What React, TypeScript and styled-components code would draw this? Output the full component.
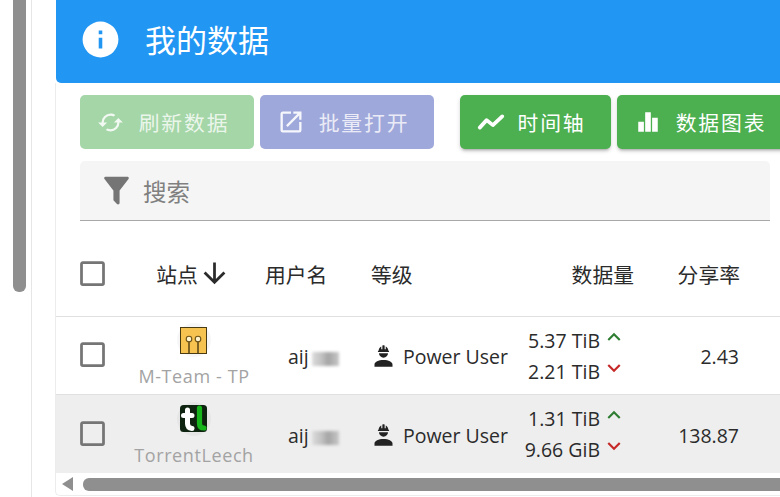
import styled, { createGlobalStyle } from 'styled-components';

const GlobalStyle = createGlobalStyle`
  html, body {
    margin: 0;
    padding: 0;
    width: 780px;
    height: 497px;
    overflow: hidden;
    background: #fff;
  }
  body {
    font-family: "Open Sans", "Noto Sans CJK SC", sans-serif;
    color: rgba(0, 0, 0, 0.87);
  }
`;

const paths = {
  info: 'M13,9H11V7H13M13,17H11V11H13M12,2A10,10 0 0,0 2,12A10,10 0 0,0 12,22A10,10 0 0,0 22,12A10,10 0 0,0 12,2Z',
  cached: 'M19,8L15,12H18A6,6 0 0,1 12,18C11,18 10.03,17.75 9.2,17.3L7.74,18.76C8.97,19.54 10.43,20 12,20A8,8 0 0,0 20,12H23M6,12A6,6 0 0,1 12,6C13,6 13.97,6.25 14.8,6.7L16.26,5.24C15.03,4.46 13.57,4 12,4A8,8 0 0,0 4,12H1L5,16L9,12',
  open: 'M14,3V5H17.59L7.76,14.83L9.17,16.24L19,6.41V10H21V3M19,19H5V5H12V3H5C3.89,3 3,3.9 3,5V19A2,2 0 0,0 5,21H19A2,2 0 0,0 21,19V12H19V19Z',
  bars: 'M3,21V11.8H8.2V21H3M9.4,21V3H14.6V21H9.4M15.8,21V8H21V21H15.8Z',
  filter: 'M14,12V19.88C14.04,20.18 13.94,20.5 13.71,20.71C13.32,21.1 12.69,21.1 12.3,20.71L10.29,18.7C10.06,18.47 9.96,18.16 10,17.88V12H9.97L4.21,4.62C3.87,4.19 3.95,3.56 4.38,3.22C4.57,3.08 4.78,3 5,3H19C19.22,3 19.43,3.08 19.62,3.22C20.05,3.56 20.13,4.19 19.79,4.62L14.03,12H14Z',
  checkbox: 'M19,3H5C3.89,3 3,3.89 3,5V19A2,2 0 0,0 5,21H19A2,2 0 0,0 21,19V5C21,3.89 20.1,3 19,3M19,5V19H5V5H19Z',
  arrowDown: 'M11,4H13V16L18.5,10.5L19.92,11.92L12,19.84L4.08,11.92L5.5,10.5L11,16V4Z',
  hardHat: 'M12,15C7.58,15 4,16.79 4,19V21H20V19C20,16.79 16.42,15 12,15M8,9A4,4 0 0,0 12,13A4,4 0 0,0 16,9M11.5,2C11.2,2 11,2.21 11,2.5V5.5H10V3C10,3 7.75,3.86 7.75,6.75C7.75,6.75 7,6.89 7,8H17C16.95,6.89 16.25,6.75 16.25,6.75C16.25,3.86 14,3 14,3V5.5H13V2.5C13,2.21 12.81,2 12.5,2H11.5Z',
  chevronUp: 'M7.41,15.41L12,10.83L16.59,15.41L18,14L12,8L6,14L7.41,15.41Z',
  chevronDown: 'M7.41,8.58L12,13.17L16.59,8.58L18,10L12,16L6,10L7.41,8.58Z',
};

const Icon = ({ d, size, color }: { d: string; size: number; color: string }) => (
  <svg width={size} height={size} viewBox="0 0 24 24" fill={color} style={{ flexShrink: 0, display: 'block' }}>
    <path d={d} />
  </svg>
);

const TimelineIcon = () => (
  <svg width={30} height={30} viewBox="0 0 24 24" fill="none" stroke="#fff" strokeWidth={3} strokeLinecap="round" strokeLinejoin="round" style={{ flexShrink: 0, display: 'block' }}>
    <path d="M3 16.5L8.5 10.5L13.5 14.5L21 7.5" />
  </svg>
);

const MTeamLogo = () => (
  <svg width={27} height={27} viewBox="0 0 27 27" style={{ display: 'block' }}>
    <rect x="0.5" y="0.5" width="26" height="26" fill="#f6c250" stroke="#4a3a12" />
    <path d="M9 14V26M18 14V26" stroke="#4a3a12" strokeWidth="1.4" />
    <circle cx="9" cy="12" r="2.8" fill="#fff3d0" stroke="#6b5215" strokeWidth="1.1" />
    <circle cx="18" cy="12" r="2.8" fill="#fff3d0" stroke="#6b5215" strokeWidth="1.1" />
  </svg>
);

const LeechLogo = () => (
  <svg width={27} height={27} viewBox="0 0 27 27" style={{ display: 'block' }}>
    <rect width="27" height="27" rx="3.5" fill="#0e2410" />
    <path d="M7.5 5V18.5Q7.5 23 12 23.5M3.5 10.5H12" stroke="#fff" strokeWidth="5" fill="none" strokeLinecap="round" />
    <path d="M19.5 3V18.5Q19.5 23 24 23" stroke="#17b51c" strokeWidth="5.2" fill="none" strokeLinecap="round" />
  </svg>
);

const Page = styled.div`
  display: flex;
  width: 780px;
  height: 497px;
  overflow: hidden;
`;

const Gutter = styled.div`
  flex: 0 0 55px;
  display: flex;
  height: 497px;
`;

const PageScrollThumb = styled.div`
  margin-left: 13px;
  width: 13px;
  height: 292px;
  border-radius: 0 0 6px 6px;
  background: #8f8f8f;
`;

const DrawerLine = styled.div`
  margin-left: 5px;
  width: 1px;
  height: 497px;
  background: #e6e6e6;
`;

const Main = styled.main`
  flex: 0 0 725px;
  min-width: 0;
  display: flex;
  flex-direction: column;
`;

const Banner = styled.header`
  flex: 0 0 83px;
  box-sizing: border-box;
  display: flex;
  align-items: center;
  background: #2196f3;
  border-radius: 0 0 0 5px;
  padding: 0 0 4px 23px;
  gap: 23px;
  margin-left: 1px;
  color: #fff;
  font-size: 31px;
  font-family: "Noto Sans CJK SC", sans-serif;
`;

const BannerTitle = styled.span`
  margin-top: -3px;
`;

const Card = styled.section`
  flex: 1;
  border-left: 1px solid #ececec;
  border-bottom: 1px solid #ececec;
  border-radius: 0 0 0 5px;
  display: flex;
  flex-direction: column;
  min-height: 0;
  margin-bottom: 1px;
`;

const Toolbar = styled.div`
  display: flex;
  align-items: flex-start;
  padding: 12px 0 0 24px;
  flex: 0 0 79px;
  box-sizing: border-box;
  white-space: nowrap;
`;

const Button = styled.div<{ $bg: string; $w: number; $raised?: boolean; $gap: number; $endPad: number }>`
  flex: 0 0 ${p => p.$w}px;
  box-sizing: border-box;
  height: 54px;
  margin-right: 6px;
  padding-right: ${p => p.$endPad}px;
  display: flex;
  align-items: center;
  justify-content: center;
  gap: ${p => p.$gap}px;
  border-radius: 5px;
  background: ${p => p.$bg};
  color: ${p => (p.$raised ? '#fff' : 'rgba(255,255,255,0.8)')};
  font-family: "Noto Sans CJK SC", sans-serif;
  font-size: 20.8px;
  letter-spacing: 1.85px;
  box-shadow: ${p => (p.$raised ? '0 3px 3px -2px rgba(0,0,0,.25), 0 2px 4px rgba(0,0,0,.16)' : 'none')};
`;

const ToolbarDivider = styled.div`
  width: 1px;
  height: 65px;
  margin: 0 13px 0 7px;
  background: #eeeeee;
`;

const SearchBar = styled.div`
  margin: -1px 0 0 24px;
  flex: 0 0 60px;
  width: 690px;
  box-sizing: border-box;
  display: flex;
  align-items: center;
  padding-left: 18px;
  gap: 8px;
  background: #f5f5f5;
  border-bottom: 1px solid #a8a8a8;
  border-radius: 5px 5px 0 0;
  color: #808080;
  font-family: "Noto Sans CJK SC", sans-serif;
  font-size: 23.5px;
`;

const columns = '72px 126px 100px 164px 128px 134px';

const HeadRow = styled.div`
  display: grid;
  grid-template-columns: ${columns};
  flex: 0 0 96px;
  padding-top: 10px;
  align-items: center;
  border-bottom: 1px solid #e0e0e0;
  box-sizing: border-box;
  font-family: "Noto Sans CJK SC", sans-serif;
  font-size: 20.8px;
  color: #2b2b2b;
`;

const HeadCell = styled.div<{ $align?: string; $pad?: string }>`
  display: flex;
  align-items: center;
  justify-content: ${p => p.$align ?? 'flex-start'};
  padding: ${p => p.$pad ?? '0'};
  white-space: nowrap;
`;

const Row = styled.div<{ $alt?: boolean }>`
  display: grid;
  grid-template-columns: ${columns};
  flex: 0 0 78px;
  box-sizing: border-box;
  padding-top: 2px;
  align-items: center;
  background: ${p => (p.$alt ? '#eeeeee' : '#fff')};
  border-bottom: ${p => (p.$alt ? 'none' : '1px solid #e0e0e0')};
  font-size: 19.5px;
  color: #2b2b2b;
`;

const CheckCell = styled.div<{ $lift?: number }>`
  padding-left: 20px;
  margin-bottom: ${p => p.$lift ?? 0}px;
`;

const SiteCell = styled.div`
  display: flex;
  flex-direction: column;
  align-items: center;
  margin-bottom: 4px;
  white-space: nowrap;
`;

const LogoWrap = styled.div`
  width: 34px;
  height: 34px;
  border-radius: 50%;
  display: flex;
  align-items: center;
  justify-content: center;
  background: rgba(0, 0, 0, 0.035);
  margin: -2px 0 0 5px;
`;

const SiteName = styled.div`
  margin: 7px 0 -4px 6px;
  font-size: 18px;
  line-height: 24px;
  letter-spacing: 0.6px;
  color: #a3a3a3;
`;

const UserCell = styled.div`
  display: flex;
  align-items: center;
  padding-left: 34px;
`;

const BlurredName = styled.span`
  display: inline-block;
  width: 27px;
  height: 14px;
  margin: 5px 0 0 3px;
  background: linear-gradient(90deg, #dcdcdc 0%, #bdbdbd 40%, #a4a4a4 60%, #c8c8c8 100%);
  filter: blur(1.5px);
`;

const LevelCell = styled.div`
  display: flex;
  align-items: center;
  gap: 6px;
  padding-left: 16px;
  white-space: nowrap;
`;

const DataCell = styled.div`
  display: flex;
  flex-direction: column;
  align-items: flex-end;
  padding-right: 19px;
  margin-bottom: 2px;
  line-height: 31px;
`;

const DataLine = styled.div`
  display: flex;
  align-items: center;
  white-space: nowrap;
`;

const ChevronSlot = styled.span`
  margin: -7px 0 0 1px;
`;

const RatioCell = styled.div`
  text-align: right;
  padding-right: 41px;
`;

const ScrollRow = styled.div`
  display: flex;
  align-items: center;
  flex: 0 0 22px;
  box-sizing: border-box;
`;

const ScrollArrow = styled.div`
  margin-left: 6px;
  width: 0;
  height: 0;
  border-top: 7px solid transparent;
  border-bottom: 7px solid transparent;
  border-right: 11px solid #8f8f8f;
`;

const ScrollThumb = styled.div`
  margin-left: 10px;
  flex: 1;
  height: 13px;
  border-radius: 6px 0 0 6px;
  background: #8f8f8f;
`;

const sites = [
  { name: 'M-Team - TP', logo: <MTeamLogo />, up: '5.37 TiB', down: '2.21 TiB', ratio: '2.43' },
  { name: 'TorrentLeech', logo: <LeechLogo />, up: '1.31 TiB', down: '9.66 GiB', ratio: '138.87', alt: true },
];

export default function App() {
  return (
    <Page>
      <GlobalStyle />
      <Gutter>
        <PageScrollThumb />
        <DrawerLine />
      </Gutter>
      <Main>
        <Banner>
          <Icon d={paths.info} size={43} color="#fff" />
          <BannerTitle>我的数据</BannerTitle>
        </Banner>
        <Card>
          <Toolbar>
            <Button $bg="#a5d6a7" $w={174} $gap={15} $endPad={8}>
              <Icon d={paths.cached} size={27} color="rgba(255,255,255,0.85)" />
              刷新数据
            </Button>
            <Button $bg="#9fa8da" $w={174} $gap={14} $endPad={8}>
              <Icon d={paths.open} size={28} color="rgba(255,255,255,0.9)" />
              批量打开
            </Button>
            <ToolbarDivider />
            <Button $bg="#4caf50" $w={151} $raised $gap={12} $endPad={10}>
              <TimelineIcon />
              时间轴
            </Button>
            <Button $bg="#4caf50" $w={170} $raised $gap={15} $endPad={3}>
              <Icon d={paths.bars} size={26} color="#fff" />
              数据图表
            </Button>
          </Toolbar>
          <SearchBar>
            <Icon d={paths.filter} size={37} color="#757575" />
            搜索
          </SearchBar>
          <HeadRow>
            <CheckCell>
              <Icon d={paths.checkbox} size={33} color="#757575" />
            </CheckCell>
            <HeadCell $align="center" $pad="0 0 0 5px">
              站点
              <Icon d={paths.arrowDown} size={33} color="#2b2b2b" />
            </HeadCell>
            <HeadCell $pad="0 0 0 11px">用户名</HeadCell>
            <HeadCell $pad="0 0 0 17px">等级</HeadCell>
            <HeadCell $align="flex-end" $pad="0 12px 0 0">数据量</HeadCell>
            <HeadCell $align="flex-end" $pad="0 40px 0 0">分享率</HeadCell>
          </HeadRow>
          {sites.map(site => (
            <Row key={site.name} $alt={site.alt}>
              <CheckCell $lift={4}>
                <Icon d={paths.checkbox} size={33} color="#757575" />
              </CheckCell>
              <SiteCell>
                <LogoWrap>{site.logo}</LogoWrap>
                <SiteName>{site.name}</SiteName>
              </SiteCell>
              <UserCell>
                aij
                <BlurredName />
              </UserCell>
              <LevelCell>
                <Icon d={paths.hardHat} size={27} color="#222" />
                Power User
              </LevelCell>
              <DataCell>
                <DataLine>
                  {site.up}
                  <ChevronSlot>
                    <Icon d={paths.chevronUp} size={26} color="#2e7d32" />
                  </ChevronSlot>
                </DataLine>
                <DataLine>
                  {site.down}
                  <ChevronSlot>
                    <Icon d={paths.chevronDown} size={26} color="#c62828" />
                  </ChevronSlot>
                </DataLine>
              </DataCell>
              <RatioCell>{site.ratio}</RatioCell>
            </Row>
          ))}
          <ScrollRow>
            <ScrollArrow />
            <ScrollThumb />
          </ScrollRow>
        </Card>
      </Main>
    </Page>
  );
}
